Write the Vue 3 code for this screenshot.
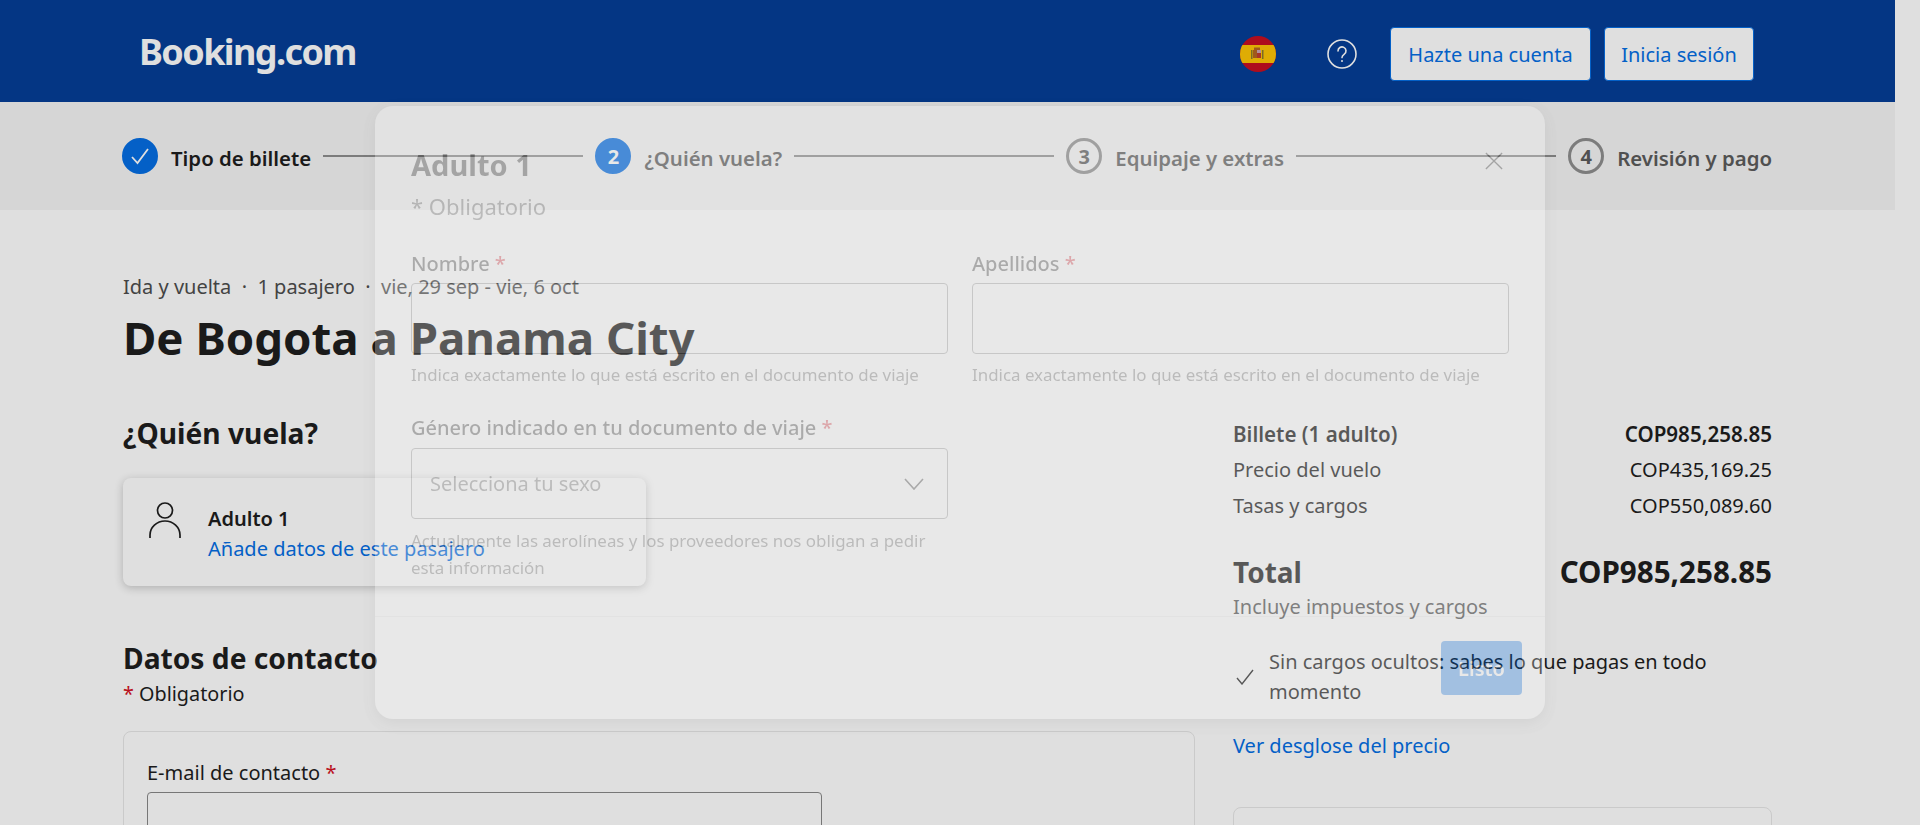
<template>
  <div class="page">
    <header class="top">
      <span class="logo">Booking.com</span>
      <svg class="flag" viewBox="0 0 36 36">
        <clipPath id="flag-clip"><circle cx="18" cy="18" r="18" /></clipPath>
        <g clip-path="url(#flag-clip)">
          <rect width="36" height="36" fill="#c60b1e" />
          <rect y="9" width="36" height="18" fill="#ffc400" />
          <rect x="13" y="14" width="5" height="8" fill="#b5651d" />
          <rect x="17" y="14" width="4" height="4" fill="#c9a4b4" />
          <rect x="17" y="17" width="4" height="5" fill="#c0392b" />
          <rect x="11" y="14" width="1.5" height="9" fill="#8a7a2a" />
          <rect x="22" y="14" width="1.5" height="9" fill="#8a7a2a" />
          <rect x="14" y="11.5" width="6" height="2.5" fill="#b5651d" />
        </g>
      </svg>
      <svg class="help" viewBox="0 0 30 30" fill="none" stroke="#fff" stroke-width="1.6">
        <circle cx="15" cy="15" r="14" />
        <path d="M11 12a4 4 0 1 1 6.3 3.2c-1.4 1-2.3 1.7-2.3 3.4" stroke-linecap="round" />
        <circle cx="15" cy="22" r="1" fill="#fff" stroke="none" />
      </svg>
      <button class="top-btn first">Hazte una cuenta</button>
      <button class="top-btn second">Inicia sesión</button>
    </header>

    <nav class="stepper">
      <div class="stepper-in">
        <template v-for="(step, i) in steps" :key="step.label">
          <div class="step" :class="step.state">
            <span class="dot">
              <svg v-if="step.state === 'done'" viewBox="0 0 20 20" width="20" height="20" fill="none" stroke="#fff" stroke-width="1.8">
                <path d="M2 11l5.5 6L18 3" />
              </svg>
              <template v-else>{{ i + 1 }}</template>
            </span>
            <span class="step-label">{{ step.label }}</span>
          </div>
          <span v-if="i < steps.length - 1" class="line"></span>
        </template>
      </div>
    </nav>

    <main class="content">
      <section class="left">
        <p class="meta">Ida y vuelta &nbsp;·&nbsp; 1 pasajero &nbsp;·&nbsp; vie, 29 sep - vie, 6 oct</p>
        <h1>De Bogota a Panama City</h1>
        <h2 class="who">¿Quién vuela?</h2>
        <div class="traveler">
          <svg class="person" viewBox="0 0 32 36" fill="none" stroke="#1a1a1a" stroke-width="1.7">
            <circle cx="16" cy="8.5" r="7.5" />
            <path d="M1 36v-3a15 14 0 0 1 30 0v3" />
          </svg>
          <div class="traveler-text">
            <p class="traveler-name">Adulto 1</p>
            <a class="link">Añade datos de este pasajero</a>
          </div>
        </div>
        <h2 class="contact-title">Datos de contacto</h2>
        <p class="required"><span class="star">*</span> Obligatorio</p>
        <div class="contact-card">
          <label class="contact-label">E-mail de contacto <span class="star">*</span></label>
          <div class="contact-input"></div>
        </div>
      </section>

      <aside class="right">
        <div class="row bold"><span>Billete (1 adulto)</span><span>COP985,258.85</span></div>
        <div class="row"><span>Precio del vuelo</span><span>COP435,169.25</span></div>
        <div class="row"><span>Tasas y cargos</span><span>COP550,089.60</span></div>
        <div class="total"><span>Total</span><span class="total-price">COP985,258.85</span></div>
        <p class="taxes">Incluye impuestos y cargos</p>
        <div class="no-fees">
          <svg viewBox="0 0 18 16" width="18" height="16" fill="none" stroke="#1a1a1a" stroke-width="1.4">
            <path d="M1 9l5 6L17 1" />
          </svg>
          <p>Sin cargos ocultos: sabes lo que pagas en todo momento</p>
        </div>
        <a class="link breakdown">Ver desglose del precio</a>
        <div class="side-card"></div>
      </aside>
    </main>
  </div>

  <div class="overlay">
    <div class="modal">
      <div class="modal-body">
        <svg class="close" viewBox="0 0 20 20" fill="none" stroke="#1a1a1a" stroke-width="1.5">
          <path d="M1 1l18 18M19 1L1 19" />
        </svg>
        <h2 class="modal-title">Adulto 1</h2>
        <p class="modal-sub">* Obligatorio</p>
        <div class="fields">
          <div class="field">
            <label>Nombre <span class="star">*</span></label>
            <div class="box"></div>
            <p class="hint">Indica exactamente lo que está escrito en el documento de viaje</p>
          </div>
          <div class="field">
            <label>Apellidos <span class="star">*</span></label>
            <div class="box"></div>
            <p class="hint">Indica exactamente lo que está escrito en el documento de viaje</p>
          </div>
          <div class="field gender">
            <label>Género indicado en tu documento de viaje <span class="star">*</span></label>
            <div class="box select">
              <span>Selecciona tu sexo</span>
              <svg viewBox="0 0 20 12" width="20" height="12" fill="none" stroke="#1a1a1a" stroke-width="1.6">
                <path d="M1 1l9 10 9-10" />
              </svg>
            </div>
            <p class="hint tall">Actualmente las aerolíneas y los proveedores nos obligan a pedir esta información</p>
          </div>
        </div>
      </div>
      <div class="modal-foot">
        <button class="listo">Listo</button>
      </div>
    </div>
  </div>
</template>

<script setup>
const steps = [
  { label: 'Tipo de billete', state: 'done' },
  { label: '¿Quién vuela?', state: 'current' },
  { label: 'Equipaje y extras', state: 'todo' },
  { label: 'Revisión y pago', state: 'todo' }
]
</script>

<style>
html,
body {
  margin: 0;
  height: 100%;
  overflow: hidden;
  background: #fff;
}
</style>

<style scoped>
* {
  box-sizing: border-box;
}

.page {
  width: 1895px;
  height: 825px;
  overflow: hidden;
  font-family: "Noto Sans", "Open Sans", sans-serif;
  color: #1a1a1a;
  font-size: 20px;
}

p,
h1,
h2 {
  margin: 0;
}

.top {
  height: 102px;
  background: #003b95;
  display: flex;
  align-items: center;
  padding: 6px 141px 0 139px;
}

.logo {
  font-family: "Noto Sans", sans-serif;
  font-size: 36px;
  font-weight: 700;
  letter-spacing: -1.6px;
  color: #fff;
  margin-right: auto;
  margin-top: -6px;
}

.flag {
  width: 36px;
  height: 36px;
  margin-right: 51px;
}

.help {
  width: 30px;
  height: 30px;
  margin-right: 33px;
}

.top-btn {
  height: 54px;
  padding: 0;
  border: 1px solid #006ce4;
  border-radius: 4px;
  background: #fff;
  color: #006ce4;
  font: 20px "Noto Sans", sans-serif;
  white-space: nowrap;
}

.top-btn.first {
  width: 201px;
  margin-right: 13px;
}

.top-btn.second {
  width: 150px;
}

.stepper {
  height: 108px;
  background: #f5f5f5;
}

.stepper-in {
  width: 1650px;
  margin: 0 123px 0 122px;
  height: 108px;
  display: flex;
  align-items: center;
}

.step {
  display: flex;
  align-items: center;
  gap: 13px;
  font-weight: 600;
  color: #595959;
  white-space: nowrap;
  flex-shrink: 0;
}

.step.done {
  color: #1a1a1a;
}

.step-label {
  padding-top: 3px;
  font-size: 20.4px;
}

.dot {
  width: 36px;
  height: 36px;
  flex-shrink: 0;
  border-radius: 50%;
  border: 3px solid #8c8c8c;
  display: flex;
  align-items: center;
  justify-content: center;
  font-weight: 700;
}

.done .dot,
.current .dot {
  background: #006ce4;
  border-color: #006ce4;
  color: #fff;
}

.line {
  flex: 1;
  height: 2px;
  background: #8c8c8c;
  margin: -1px 12px 0;
}

.content {
  width: 1649px;
  margin: 0 123px;
  padding-top: 63px;
  display: flex;
  gap: 38px;
}

.left {
  width: 1072px;
  flex-shrink: 0;
}

.meta {
  line-height: 28px;
  color: #4a4a4a;
}

h1 {
  margin-top: 6px;
  font-size: 45.6px;
  line-height: 60px;
  font-weight: 700;
}

h2 {
  font-size: 28.2px;
  line-height: 36px;
  font-weight: 700;
}

.who {
  margin-top: 48px;
}

.traveler {
  margin-top: 27px;
  width: 523px;
  height: 108px;
  border-radius: 8px;
  box-shadow: 0 2px 8px rgba(26, 26, 26, 0.24);
  display: flex;
  align-items: center;
  gap: 27px;
  padding: 0 26px;
}

.person {
  width: 32px;
  height: 36px;
  margin-bottom: 24px;
}

.traveler-text {
  padding-top: 4px;
}

.traveler-name {
  font-weight: 600;
  line-height: 30px;
}

.link {
  display: block;
  color: #006ce4;
  line-height: 30px;
}

.contact-title {
  margin-top: 54px;
}

.required {
  margin-top: 4px;
  line-height: 28px;
  font-size: 19.8px;
}

.star {
  color: #d4111e;
}

.contact-card {
  margin-top: 23px;
  height: 300px;
  border: 1px solid #e7e7e7;
  border-radius: 8px;
  padding: 27px 23px;
}

.contact-label {
  display: block;
  line-height: 28px;
}

.contact-input {
  margin-top: 5px;
  width: 675px;
  height: 71px;
  border: 1px solid #868686;
  border-radius: 4px;
}

.right {
  flex: 1;
  padding-top: 143px;
}

.row {
  display: flex;
  justify-content: space-between;
  line-height: 36px;
}

.row.bold {
  font-weight: 600;
  font-size: 20.6px;
}

.total {
  margin-top: 28px;
  display: flex;
  justify-content: space-between;
  align-items: center;
  font-size: 28px;
  font-weight: 700;
  line-height: 40px;
}

.total-price {
  font-size: 29.6px;
}

.taxes {
  line-height: 30px;
  color: #595959;
}

.no-fees {
  margin-top: 25px;
  display: flex;
  align-items: center;
  gap: 15px;
  line-height: 30px;
  padding-left: 3px;
}

.no-fees svg {
  flex-shrink: 0;
}

.breakdown {
  margin-top: 24px;
}

.side-card {
  margin-top: 46px;
  height: 200px;
  border: 1px solid #e7e7e7;
  border-radius: 8px;
}

.overlay {
  position: fixed;
  inset: 0;
  background: rgba(26, 26, 26, 0.14);
  display: flex;
  align-items: center;
  justify-content: center;
  font-family: "Noto Sans", "Open Sans", sans-serif;
  font-size: 20px;
  color: #1a1a1a;
}

.modal {
  position: relative;
  width: 1170px;
  height: 613px;
  background: #fff;
  border-radius: 18px;
  opacity: 0.27;
  box-shadow: 0 4px 16px rgba(26, 26, 26, 0.24);
  display: flex;
  flex-direction: column;
}

.modal-body {
  flex: 1;
  padding: 39px 36px 0;
}

.close {
  position: absolute;
  top: 46px;
  right: 42px;
  width: 18px;
  height: 18px;
}

.modal-title {
  font-size: 29px;
  line-height: 40px;
}

.modal-sub {
  margin-top: 6px;
  font-size: 22px;
  line-height: 30px;
  color: #595959;
}

.fields {
  margin-top: 29px;
  display: grid;
  grid-template-columns: 1fr 1fr;
  column-gap: 24px;
  row-gap: 27px;
}

.field label {
  display: block;
  line-height: 28px;
  font-weight: 500;
}

.box {
  margin-top: 5px;
  height: 71px;
  border: 1px solid #868686;
  border-radius: 4px;
}

.hint {
  margin-top: 9px;
  font-size: 16.9px;
  line-height: 24px;
  color: #595959;
}

.hint.tall {
  line-height: 27px;
  margin-top: 8px;
}

.gender .box {
  margin-top: 6px;
}

.select {
  display: flex;
  align-items: center;
  justify-content: space-between;
  padding: 0 23px 0 18px;
  color: #595959;
}

.modal-foot {
  height: 103px;
  border-top: 1px solid #e7e7e7;
  display: flex;
  align-items: center;
  justify-content: flex-end;
  padding-right: 23px;
}

.listo {
  width: 81px;
  height: 54px;
  border: 0;
  border-radius: 4px;
  background: #006ce4;
  color: #fff;
  font: 600 20px "Noto Sans", sans-serif;
}
</style>
